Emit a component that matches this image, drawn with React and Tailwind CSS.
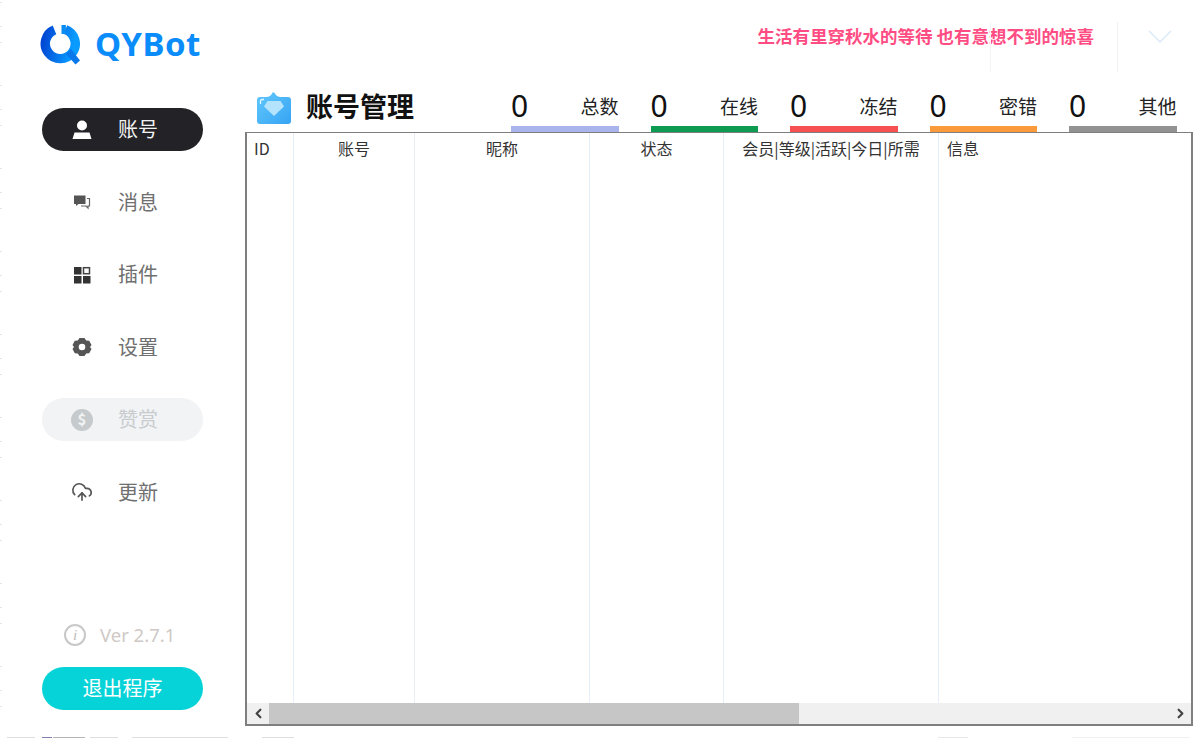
import React from "react";
import { CloudUpload, ChevronLeft, ChevronRight } from "lucide-react";

function Logo() {
  return (
    <svg width="42" height="42" viewBox="0 0 42 42" className="shrink-0">
      <defs>
        <linearGradient id="lg" x1="0" y1="0" x2="1" y2="0.2">
          <stop offset="0" stopColor="#0048d4" />
          <stop offset="1" stopColor="#0a9bff" />
        </linearGradient>
      </defs>
      <path d="M15.500 5.800A15 15 0 1 0 26.500 5.600" fill="none" stroke="url(#lg)" strokeWidth="9.400" />
      <path d="M22.500 1h4.400v9h-4.400z" fill="#0a8cf5" />
      <path d="M27 30l5-5 9 11.500-4.500 4z" fill="#0a78ea" />
    </svg>
  );
}

const UserIcon = () => (
  <svg width="22" height="22" viewBox="0 0 22 22">
    <circle cx="11" cy="6.500" r="5" fill="#fff" />
    <path d="M3.500 13.500h15l2 6.500H1.500z" fill="#fff" />
  </svg>
);
const ChatIcon = () => (
  <svg width="18" height="18" viewBox="0 0 18 18" className="ml-[2px]">
    <path d="M1 2.500h11.500v8.500H5.500L3 13v-2H1z" fill="#555" />
    <path d="M14 5.500H16.500v7.500h-1.500v2l-2-2H8" fill="none" stroke="#666" strokeWidth="1.200" />
  </svg>
);
const GridIcon = () => (
  <svg width="18" height="18" viewBox="0 0 18 18" className="ml-[2px]">
    <rect x="1" y="1" width="7.500" height="7.500" fill="#333" />
    <rect x="10.500" y="1.700" width="6" height="6" fill="none" stroke="#444" strokeWidth="1.500" />
    <rect x="1" y="10" width="7.500" height="7.500" fill="#333" />
    <rect x="10" y="10" width="7.500" height="7.500" fill="#333" />
  </svg>
);
const GearIcon = () => (
  <svg width="20" height="20" viewBox="0 0 20 20" className="ml-[1px]">
    <path fillRule="evenodd" fill="#555" d="M7.500 1h5l1.700 2.500 3 .3 2.300 4.200-1.500 2 1.500 2-2.300 4.200-3 .3L12.500 19h-5l-1.700-2.500-3-.3L.500 12l1.500-2-1.500-2 2.300-4.200 3-.3zM10 6.700a3.300 3.300 0 1 0 0 6.600 3.300 3.300 0 0 0 0-6.600z" />
  </svg>
);
const DollarIcon = () => (
  <span className="w-[22px] h-[22px] rounded-full bg-[#c6cacc] text-[#f1f3f5] text-[15px] font-bold flex items-center justify-center">$</span>
);
const InfoIcon = () => (
  <span className="w-[22px] h-[22px] rounded-full border-2 border-[#c8c8c8] text-[#bdbdbd] text-[15px] italic flex items-center justify-center [font-family:'Liberation_Serif',serif]">i</span>
);
const TitleIcon = () => (
  <svg width="34" height="32" viewBox="0 0 34 32" className="ml-[1px] shrink-0">
    <defs>
      <linearGradient id="tg" x1="0" y1="0" x2="1" y2="1">
        <stop offset="0" stopColor="#62c8fb" />
        <stop offset="1" stopColor="#36a4f4" />
      </linearGradient>
    </defs>
    <path d="M3 5h6.500c2.500 0 4.500-1.500 5.500-3.500L16 0l2 1.500c1 2 3 3.500 5.500 3.500H31a3 3 0 0 1 3 3v21a3 3 0 0 1-3 3H3a3 3 0 0 1-3-3V8a3 3 0 0 1 3-3z" fill="url(#tg)" />
    <path d="M10.500 9h13l3.500 5.500L17 24 7 14.500z" fill="#b4e3fd" />
    <path d="M3.500 12V9a1.500 1.500 0 0 1 1.500-1.500h2" fill="none" stroke="#e2f5fe" strokeWidth="1.300" />
  </svg>
);

const nav = [
  { label: "账号", icon: <UserIcon />, cls: "bg-[#232226] text-[#f2f2f2]" },
  { label: "消息", icon: <ChatIcon />, cls: "text-[#6f6f6f]" },
  { label: "插件", icon: <GridIcon />, cls: "text-[#6f6f6f]" },
  { label: "设置", icon: <GearIcon />, cls: "text-[#6f6f6f]" },
  { label: "赞赏", icon: <DollarIcon />, cls: "bg-[#f1f3f5] text-[#c9cccf]" },
  { label: "更新", icon: <CloudUpload size={22} strokeWidth={1.800} color="#555" />, cls: "text-[#6f6f6f]" },
];

const stats = [
  { label: "总数", cls: "bg-[#a9b4ec]" },
  { label: "在线", cls: "bg-[#0d9b52]" },
  { label: "冻结", cls: "bg-[#f75050]" },
  { label: "密错", cls: "bg-[#fb9a3a]" },
  { label: "其他", cls: "bg-[#929292]" },
];

const cols = [
  { label: "ID", cls: "w-[47px] pl-[7px] text-left" },
  { label: "账号", cls: "w-[121px] text-center" },
  { label: "昵称", cls: "w-[175px] text-center" },
  { label: "状态", cls: "w-[134px] text-center" },
  { label: "会员|等级|活跃|今日|所需", cls: "w-[215px] text-center" },
  { label: "信息", cls: "flex-1 pl-[8px] text-left" },
];

const ticks = [0, 1, 2, 3, 4, 5, 6, 7, 8].flatMap((k) => [2 + 83 * k, 26 + 83 * k, 42 + 83 * k]);
const fragments = [
  { left: 7, width: 28, color: "#dedede" },
  { left: 42, width: 10, color: "#8080b0" },
  { left: 53, width: 32, color: "#b4b4b4" },
  { left: 90, width: 28, color: "#dedede" },
  { left: 132, width: 96, color: "#dedede" },
  { left: 262, width: 32, color: "#dedede" },
  { left: 938, width: 30, color: "#e8e8e8" },
  { left: 1072, width: 118, color: "#f0f0f0" },
];

export default function App() {
  return (
    <div className="relative flex w-[1200px] h-[738px] overflow-hidden bg-white [font-family:'Noto_Sans_CJK_SC','Noto_Sans',sans-serif]">
      <aside className="w-[245px] shrink-0 flex flex-col pl-[42px] pt-[24px] pb-[28px]">
        <div className="flex items-center -ml-[3px] h-[42px] gap-[14px]">
          <Logo />
          <span className="text-[33px] font-bold leading-none text-[#0a8cfa] tracking-[0.500px] pb-[4px] [font-family:'Noto_Sans',sans-serif]">QYBot</span>
        </div>
        <nav className="mt-[42px] flex flex-col gap-[29.500px]">
          {nav.map((n) => (
            <div key={n.label} className={`w-[161px] h-[43px] rounded-full flex items-center text-[20px] ${n.cls}`}>
              <span className="w-[76px] pl-[29px] flex items-center justify-start shrink-0">{n.icon}</span>
              <span className="pb-[1px]">{n.label}</span>
            </div>
          ))}
        </nav>
        <div className="mt-auto flex items-center gap-[14px] pl-[22px] h-[24px] text-[#cfc9c6] text-[18.500px] [font-family:'Noto_Sans',sans-serif]">
          <InfoIcon />
          <span className="pb-[1px]">Ver 2.7.1</span>
        </div>
        <div className="mt-[20px] w-[161px] h-[43px] rounded-full bg-[#06d3d8] text-white text-[20px] pb-[2px] flex items-center justify-center">退出程序</div>
      </aside>

      <main className="flex-1 flex flex-col min-w-0 pr-[7px]">
        <div className="h-[88px] flex items-start shrink-0">
          <div className="flex-1 pt-[22px] text-right pr-[99px] text-[17.500px] font-bold text-[#ff4d84] leading-[28px] whitespace-nowrap">生活有里穿秋水的等待 也有意想不到的惊喜</div>
        </div>
        <div className="h-[44px] flex items-start shrink-0">
          <div className="flex items-center gap-[15px] w-[266px] pl-[11px]">
            <TitleIcon />
            <span className="text-[27px] font-bold leading-[36px] pb-[3px] text-[#111]">账号管理</span>
          </div>
          <div className="flex gap-[32px]">
            {stats.map((s) => (
              <div key={s.label} className="w-[107.500px] h-[44px] flex flex-col justify-between">
                <div className="flex items-center justify-between h-[36px]">
                  <span className="text-[30px] leading-[36px] text-[#111] [font-family:'Noto_Sans',sans-serif]">0</span>
                  <span className="text-[19px] leading-[36px] text-[#222]">{s.label}</span>
                </div>
                <div className={`h-[6px] ${s.cls}`} />
              </div>
            ))}
          </div>
        </div>
        <div className="w-[948px] h-[594px] border-2 border-t-[1.500px] border-[#7f7f7f] flex flex-col bg-white">
          <div className="flex-1 flex min-h-0">
            {cols.map((c, i) => (
              <div key={c.label} className={`h-full text-[16px] leading-[30px] text-[#333] whitespace-nowrap ${c.cls} ${i < cols.length - 1 ? "border-r border-[#e6eef7]" : ""}`}>{c.label}</div>
            ))}
          </div>
          <div className="h-[21px] shrink-0 bg-[#f0f0f0] flex items-center">
            <span className="w-[22px] flex justify-center"><ChevronLeft size={15} strokeWidth={3.500} color="#444" /></span>
            <div className="w-[530px] h-full bg-[#c6c6c6]" />
            <span className="ml-auto w-[22px] flex justify-center"><ChevronRight size={15} strokeWidth={3.500} color="#444" /></span>
          </div>
        </div>
      </main>

      <div className="absolute left-[990px] top-[22px] h-[50px] w-px bg-[#f4f4f6]" />
      <div className="absolute left-[1117px] top-[22px] h-[50px] w-px bg-[#f1f2f5]" />
      <svg className="absolute left-[1148px] top-[30px]" width="24" height="14" viewBox="0 0 24 14">
        <path d="M1 1l11 11L23 1" fill="none" stroke="#dbe9f8" strokeWidth="1.500" />
      </svg>
      {ticks.map((y) => (
        <div key={y} className="absolute left-0 w-[2px] h-px bg-[#e4e4e4]" style={{ top: y }} />
      ))}
      {fragments.map((f) => (
        <div key={f.left} className="absolute top-[737px] h-px" style={{ left: f.left, width: f.width, backgroundColor: f.color }} />
      ))}
    </div>
  );
}
